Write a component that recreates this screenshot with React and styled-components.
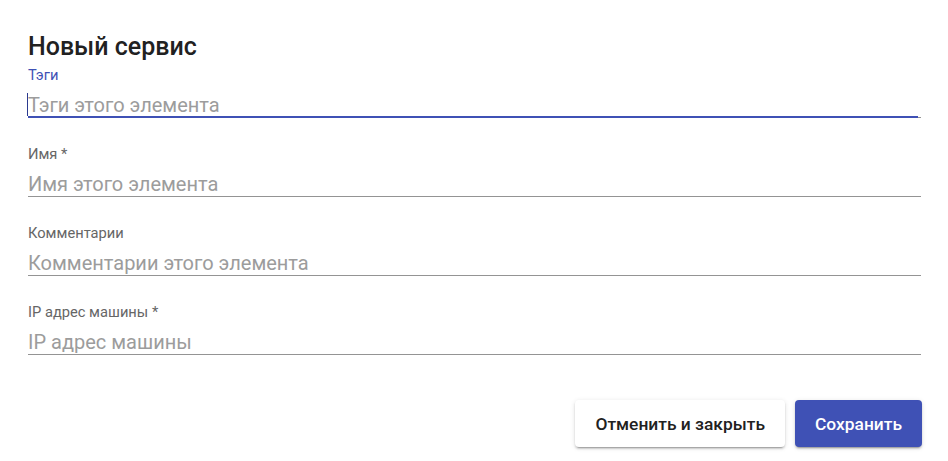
import React from "react";
import styled, { createGlobalStyle } from "styled-components";

const GlobalStyle = createGlobalStyle`
  body {
    margin: 0;
    background: #ffffff;
    font-family: Roboto, "Noto Sans", Arial, sans-serif;
  }
`;

const Dialog = styled.div`
  width: 948px;
  height: 461px;
  box-sizing: border-box;
  padding: 33px 27px 0 28px;
  display: flex;
  flex-direction: column;
`;

const Title = styled.h2`
  margin: 0 0 6px;
  font-size: 25px;
  line-height: 28px;
  font-weight: 500;
  color: #212121;
`;

const Fields = styled.div`
  display: flex;
  flex-direction: column;
  gap: 28px;
`;

const Field = styled.label`
  display: flex;
  flex-direction: column;
  gap: 10px;
`;

const Label = styled.span`
  font-size: 14.7px;
  line-height: 16px;
  color: ${(p) => (p.$focused ? "#3f51b5" : "#666666")};
`;

const InputWrap = styled.div`
  position: relative;
  border-bottom: 1px solid #949494;

  &::after {
    content: "";
    display: ${(p) => (p.$focused ? "block" : "none")};
    position: absolute;
    left: 0;
    right: 3px;
    bottom: -1px;
    height: 2px;
    background: #3f51b5;
  }
`;

const Input = styled.input`
  display: block;
  width: 100%;
  box-sizing: border-box;
  height: 24px;
  padding: 0;
  border: 0;
  outline: none;
  background: transparent;
  font-family: inherit;
  font-size: 20px;
  line-height: 24px;
  color: #212121;
  caret-color: transparent;

  &::placeholder {
    color: #9c9c9c;
    opacity: 1;
  }
`;

const Caret = styled.span`
  position: absolute;
  left: -1px;
  top: 0;
  width: 1px;
  height: 23px;
  background: #2b3a8f;
`;

const Actions = styled.div`
  margin-top: 45px;
  margin-right: -1px;
  display: flex;
  justify-content: flex-end;
  gap: 10px;
`;

const Button = styled.button`
  height: 47px;
  padding: 0 20px;
  border: 0;
  border-radius: 4px;
  font-family: inherit;
  font-size: 17.4px;
  font-weight: 500;
  cursor: pointer;
  color: ${(p) => (p.$primary ? "#ffffff" : "#212121")};
  background: ${(p) => (p.$primary ? "#3f51b5" : "#ffffff")};
  box-shadow: 0 3px 1px -2px rgba(0, 0, 0, 0.2), 0 2px 2px 0 rgba(0, 0, 0, 0.14),
    0 1px 5px 0 rgba(0, 0, 0, 0.12);
`;

const fields = [
  { label: "Тэги", placeholder: "Тэги этого элемента", focused: true },
  { label: "Имя *", placeholder: "Имя этого элемента" },
  { label: "Комментарии", placeholder: "Комментарии этого элемента" },
  { label: "IP адрес машины *", placeholder: "IP адрес машины" },
];

export default function App() {
  return (
    <>
      <GlobalStyle />
      <Dialog>
        <Title>Новый сервис</Title>
        <Fields>
          {fields.map((f) => (
            <Field key={f.label}>
              <Label $focused={f.focused}>{f.label}</Label>
              <InputWrap $focused={f.focused}>
                <Input placeholder={f.placeholder} />
                {f.focused && <Caret />}
              </InputWrap>
            </Field>
          ))}
        </Fields>
        <Actions>
          <Button>Отменить и закрыть</Button>
          <Button $primary>Сохранить</Button>
        </Actions>
      </Dialog>
    </>
  );
}
